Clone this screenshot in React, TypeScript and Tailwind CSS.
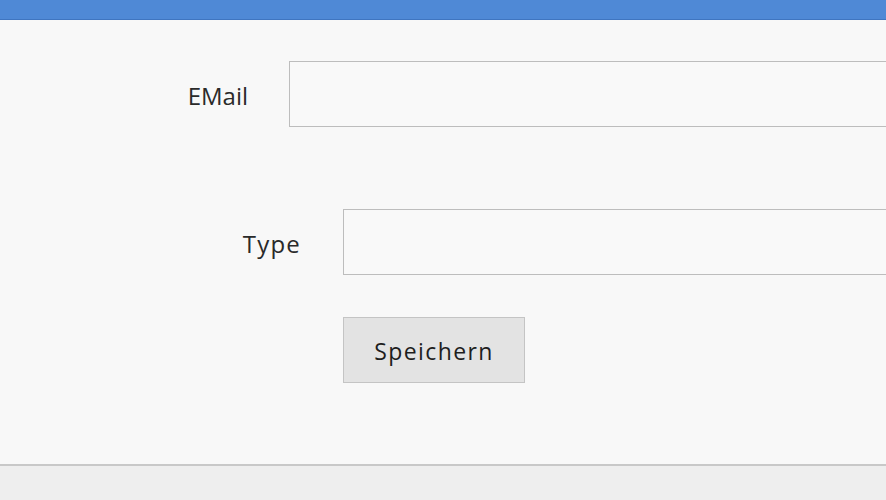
export default function App() {
  const font = { fontFamily: '"Open Sans", "Noto Sans", sans-serif' };
  return (
    <div className="flex h-[500px] w-[886px] flex-col overflow-hidden bg-[#f8f8f8] text-[#222]" style={font}>
      <div className="h-[20px] shrink-0 border-b border-[#3f75c0] bg-[#4f89d6]" />

      <main className="flex flex-1 flex-col">
        <div className="mt-[41px] flex items-center">
          <label className="w-[248px] shrink-0 pt-[4px] text-right text-[24px] font-normal text-[#2a2a2a]">EMail</label>
          <input
            type="text"
            className="ml-[41px] h-[66px] w-[700px] shrink-0 border border-[#bdbdbd] bg-[#f9f9f9] outline-none"
          />
        </div>

        <div className="mt-[82px] flex items-center">
          <label className="w-[301px] shrink-0 pt-[4px] text-right text-[24px] font-normal tracking-[1.2px] text-[#2a2a2a]">
            Type
          </label>
          <input
            type="text"
            className="ml-[42px] h-[66px] w-[700px] shrink-0 border border-[#bdbdbd] bg-[#f9f9f9] outline-none"
          />
        </div>

        <div className="mt-[42px] pl-[343px]">
          <button className="h-[66px] w-[182px] border border-[#c4c4c4] bg-[#e3e3e3] pt-[2px] text-[23px] font-medium tracking-[1.4px] text-[#1e1e1e]">
            Speichern
          </button>
        </div>
      </main>

      <footer className="h-[36px] shrink-0 border-t-2 border-[#c8c8c8] bg-[#eeeeee]" />
    </div>
  );
}
